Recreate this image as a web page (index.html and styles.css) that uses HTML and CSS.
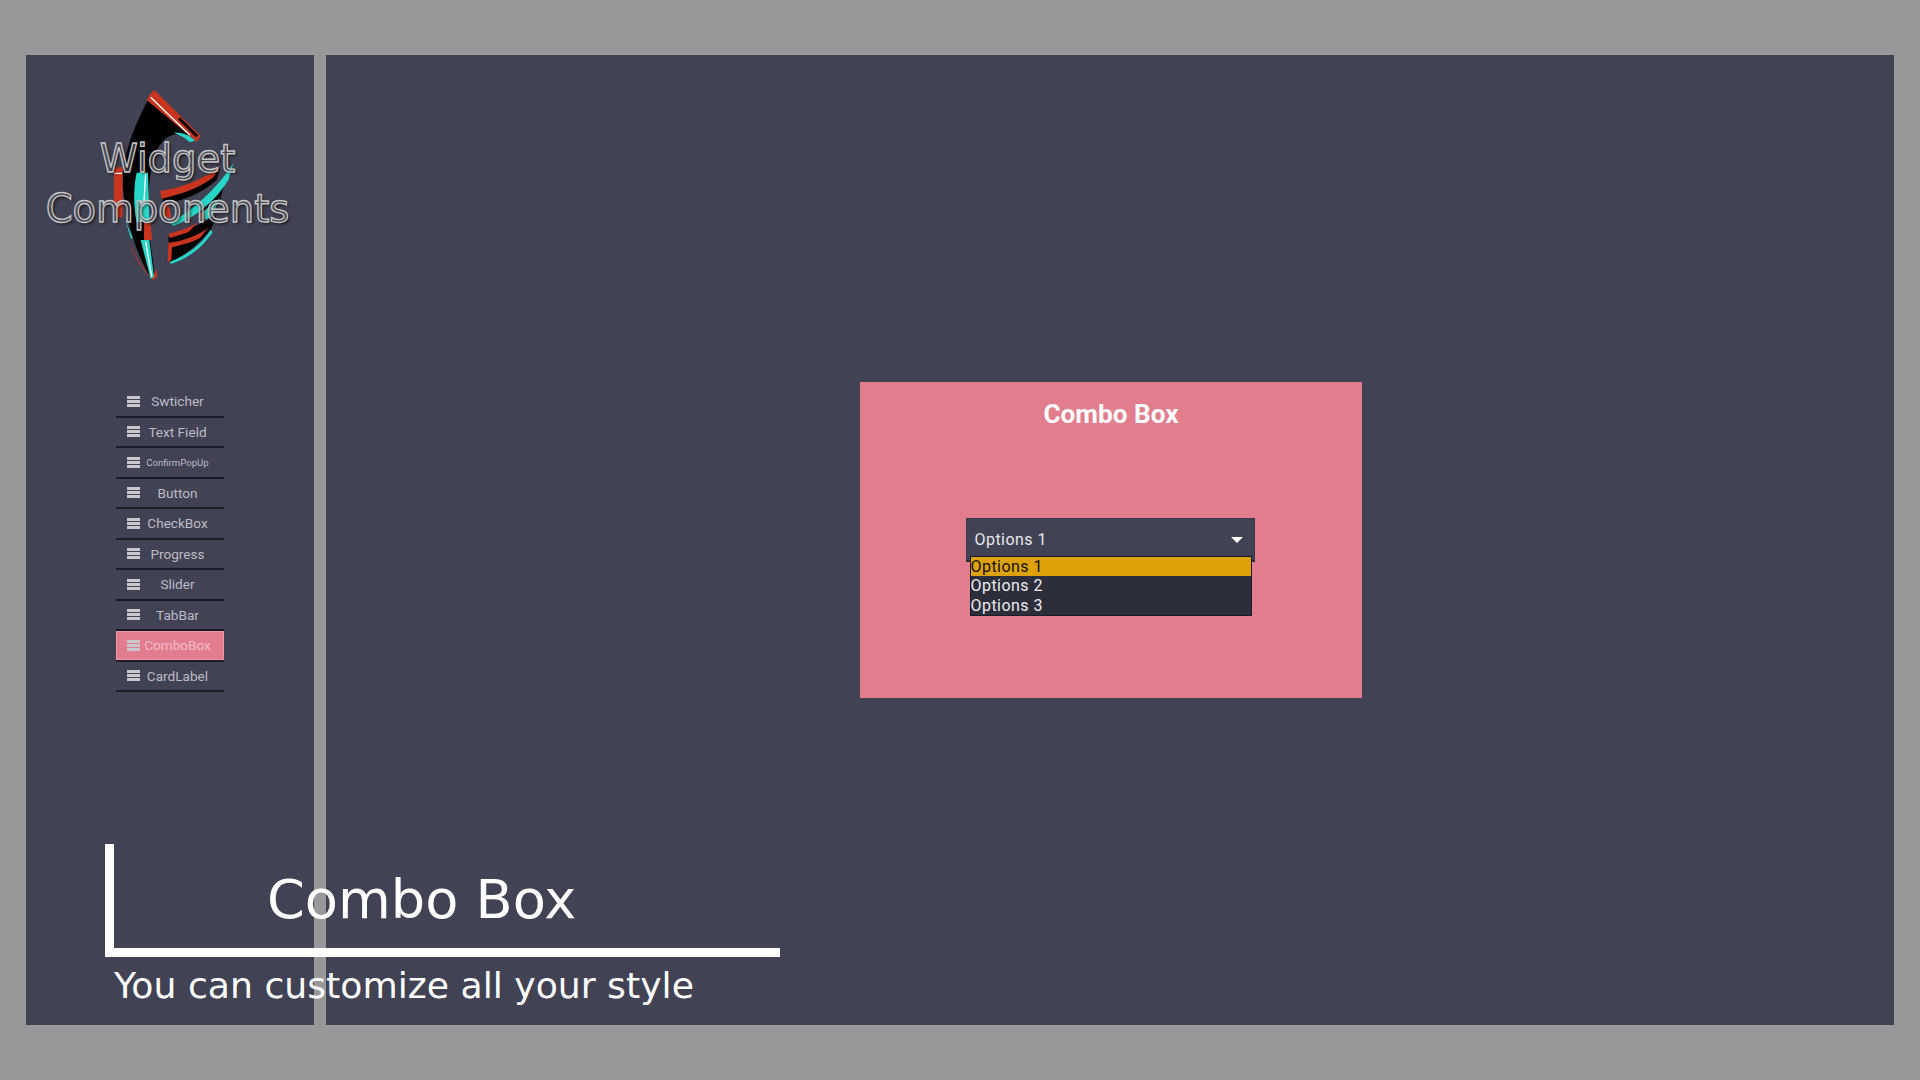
FILE: index.html
```html
<!DOCTYPE html>
<html lang="en">
<head>
<meta charset="utf-8">
<title>Widget Components</title>
<link rel="stylesheet" href="styles.css">
</head>
<body>
<aside class="sidebar">
  <div class="brand">
    <svg class="logo" viewBox="0 0 960 720" aria-hidden="true">
      <path class="k" d="M395 100 L530 235 C480 212 430 215 405 285 C385 350 380 440 385 500 L405 650 L395 657 C350 590 310 460 308 360 C310 280 345 190 395 100Z"/>
      <path class="k" d="M425 405 C490 395 550 365 600 325 L590 360 C540 405 480 425 430 432Z"/>
      <path class="k" d="M450 490 C520 450 580 400 620 345 L600 420 L570 480 L540 455Z"/>
      <path class="k" d="M445 530 C500 510 550 490 590 465 L575 505 C530 560 490 590 448 607Z"/>
      <path class="r" d="M403 90 L542 228 L530 245 L380 120 L388 106Z"/>
      <path class="k" d="M480 172 L534 226 L528 232 L474 178Z"/>
      <path class="r" d="M282 322 H308 V472 H290 L282 420Z"/>
      <path class="r" d="M420 393 C490 383 550 356 600 320 L580 352 C540 384 480 404 425 416Z"/>
      <path class="r" d="M426 430 L445 430 L454 472 L432 474Z"/>
      <path class="r" d="M372 485 L392 490 L396 540 L372 540Z"/>
      <path class="r" d="M330 545 C345 590 365 620 395 655 L410 628 L412 650 L398 660 C365 625 340 590 330 545Z"/>
      <path class="r" d="M445 548 C490 543 530 528 565 503 L540 534 C510 550 480 555 456 562 L454 600 L443 608Z"/>
      <path class="r" d="M445 521 C480 513 510 503 535 486 L505 517 L450 534Z"/>
      <path class="r" d="M535 470 L560 445 L575 448 L550 475Z"/>
      <path class="c" d="M350 338 H384 L388 485 L350 487 C340 440 340 380 350 338Z"/>
      <path class="c" d="M362 540 H388 L402 650 L392 657Z"/>
      <path class="c" d="M450 490 C515 450 585 395 640 310 L625 360 C585 425 530 470 460 498Z"/>
      <path class="c" d="M450 605 C490 590 540 560 572 510 L578 516 C545 568 495 600 452 612Z"/>
      <path class="c" d="M462 218 C490 216 510 228 525 242 L510 247 C495 232 480 226 462 218Z"/>
      <path class="c" d="M316 480 L338 535 L333 537 Z"/>
      <path class="c" d="M550 455 L600 415 L575 470 L555 480Z"/>
      <path class="w" d="M392 112 L510 226 M377 340 L371 440 M377 545 L395 650 M283 340 H306"/>
    </svg>
    <h1 class="brand-title">Widget<br>Components</h1>
  </div>
  <nav class="menu">
    <a class="item"><span class="bars"></span><span class="label">Swticher</span></a>
    <a class="item"><span class="bars"></span><span class="label">Text Field</span></a>
    <a class="item"><span class="bars"></span><span class="label small">ConfirmPopUp</span></a>
    <a class="item"><span class="bars"></span><span class="label">Button</span></a>
    <a class="item"><span class="bars"></span><span class="label">CheckBox</span></a>
    <a class="item"><span class="bars"></span><span class="label">Progress</span></a>
    <a class="item"><span class="bars"></span><span class="label">Slider</span></a>
    <a class="item"><span class="bars"></span><span class="label">TabBar</span></a>
    <a class="item active"><span class="bars"></span><span class="label">ComboBox</span></a>
    <a class="item"><span class="bars"></span><span class="label">CardLabel</span></a>
  </nav>
</aside>
<main class="stage">
  <section class="card">
    <h2 class="card-title">Combo Box</h2>
    <div class="combo">
      <div class="combo-head"><span>Options 1</span><span class="arrow"></span></div>
      <ul class="options">
        <li class="option selected">Options 1</li>
        <li class="option">Options 2</li>
        <li class="option">Options 3</li>
      </ul>
    </div>
  </section>
</main>
<div class="caption">
  <div class="caption-frame"><span class="caption-title">Combo Box</span></div>
  <p class="caption-sub">You can customize all your style</p>
</div>
</body>
</html>
```

FILE: styles.css
```css
* { box-sizing: border-box; }
html, body { height: 100%; }
body {
  margin: 0;
  height: 1080px;
  padding: 55px 26px;
  display: flex;
  gap: 12px;
  background: #98989a;
  overflow: hidden;
  position: relative;
  font-family: Roboto, sans-serif;
}
.sidebar {
  width: 288px;
  height: 970px;
  flex: none;
  background: #414254;
  padding-top: 79px;
}
.brand { position: relative; height: 253px; }
.logo {
  position: absolute;
  left: -6px;
  top: -74px;
  width: 320px;
  height: 240px;
}
.logo .k { fill: #000; }
.logo .r { fill: #c9341f; }
.logo .c { fill: #26d6c8; }
.logo .w { fill: none; stroke: #fff; stroke-width: 4; }
.brand-title {
  position: relative;
  margin: 0;
  text-align: center;
  padding-right: 5px;
  font-family: "DejaVu Sans", sans-serif;
  font-weight: 400;
  font-size: 38.5px;
  line-height: 50px;
  color: rgba(100, 100, 108, .5);
  -webkit-text-stroke: 1.3px #c6c6c6;
  text-shadow: 2px 2px 3px rgba(0, 0, 0, .55);
}
.menu {
  margin-left: 90px;
  width: 108px;
  display: flex;
  flex-direction: column;
}
.item {
  height: 30.5px;
  display: flex;
  align-items: center;
  padding: 0 9px 0 11px;
  border-bottom: 2px solid #1c1c28;
  color: #bcbcc4;
  font-size: 13.6px;
}
.bars {
  width: 13px;
  height: 11px;
  flex: none;
  background: repeating-linear-gradient(#c8c8cc 0 3px, transparent 3px 4px);
}
.label { flex: 1; text-align: center; white-space: nowrap; }
.label.small { font-size: 9.6px; }
.item.active {
  background: #e27d8f;
  box-shadow: inset 0 0 0 1px #ee98a6;
  color: #f2bcc6;
}
.stage {
  flex: 1;
  height: 970px;
  background: #414254;
  padding-left: 2px;
  display: flex;
  align-items: center;
  justify-content: center;
}
.card {
  width: 502px;
  height: 316px;
  background: #e27d8e;
  padding-top: 15px;
  display: flex;
  flex-direction: column;
  align-items: center;
}
.card-title {
  margin: 0;
  color: #fff;
  font-size: 26.2px;
  font-weight: 700;
  line-height: 34px;
}
.combo {
  position: relative;
  width: 289px;
  margin: 87px 2px 0 0;
}
.combo-head {
  height: 44px;
  background: #414254;
  border: 1px solid #3a3b4c;
  border-bottom: 2px solid #2a2b39;
  padding: 0 11px 0 8px;
  display: flex;
  align-items: center;
  justify-content: space-between;
  color: #e8e8ea;
  font-size: 16px;
  letter-spacing: .45px;
}
.arrow {
  width: 0;
  height: 0;
  border-left: 6px solid transparent;
  border-right: 6px solid transparent;
  border-top: 6px solid #fff;
}
.options {
  position: absolute;
  left: 4px;
  top: 38px;
  width: 282px;
  margin: 0;
  padding: 0;
  list-style: none;
  background: #2d2e3c;
  border: 1px solid #1c1c28;
  color: #ececee;
  font-size: 16px;
  letter-spacing: .45px;
}
.option { height: 19.4px; line-height: 19.4px; }
.option.selected { background: #dea207; color: #111; }
.caption {
  position: absolute;
  left: 105px;
  top: 844px;
  width: 675px;
  color: #fff;
  font-family: "DejaVu Sans", sans-serif;
}
.caption-frame {
  height: 113px;
  border-left: 9px solid #fff;
  border-bottom: 9px solid #fff;
  padding: 24px 0 0 153px;
}
.caption-title {
  display: block;
  font-size: 54.2px;
  line-height: 64px;
  white-space: nowrap;
}
.caption-sub {
  margin: 7px 0 0 9px;
  font-size: 36.2px;
  line-height: 44px;
  white-space: nowrap;
}
```
